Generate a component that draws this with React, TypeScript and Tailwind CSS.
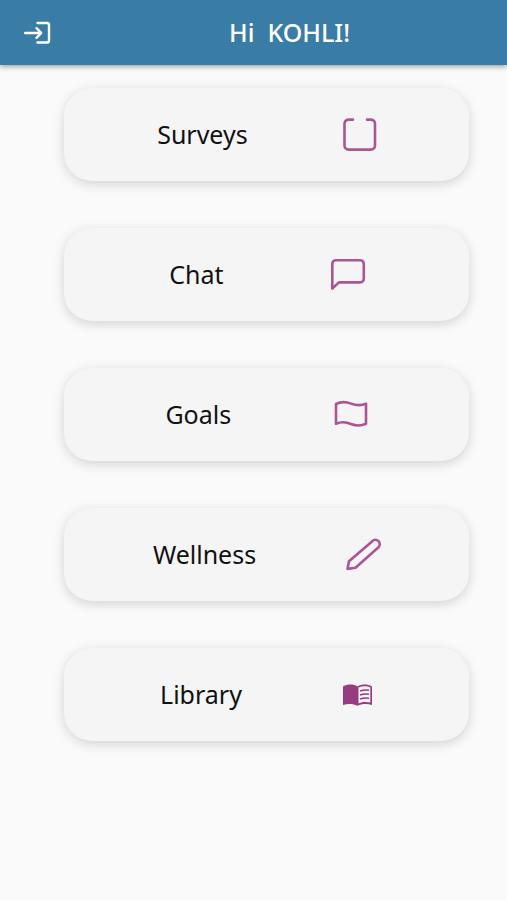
import type { ReactNode } from "react";

type MenuItem = { label: string; icon: ReactNode };

function LineIcon({ children }: { children: ReactNode }) {
  return (
    <svg
      viewBox="0 0 35 35"
      className="size-[35px] shrink-0 overflow-visible text-[#ab5595]"
      fill="none"
      stroke="currentColor"
      strokeWidth="2.6"
      strokeLinecap="round"
      strokeLinejoin="round"
      aria-hidden="true"
    >
      {children}
    </svg>
  );
}

const items: MenuItem[] = [
  {
    label: "Surveys",
    icon: (
      <LineIcon>
        <path d="M12 2.6H7.500a4 4 0 0 0-4 4v22a4 4 0 0 0 4 4h22.500a4 4 0 0 0 4-4v-22a4 4 0 0 0-4-4h-4" />
      </LineIcon>
    ),
  },
  {
    label: "Chat",
    icon: (
      <LineIcon>
        <path d="M3.300 31.500V6.800a3.600 3.600 0 0 1 3.600-3.600h24.300a3.600 3.600 0 0 1 3.600 3.600v15a3.600 3.600 0 0 1-3.600 3.600H10Z" />
      </LineIcon>
    ),
  },
  {
    label: "Goals",
    icon: (
      <LineIcon>
        <path d="M3 7c5-2.600 10-2.400 15-.4 5 1.900 10 2.100 15 .2v20c-5 2.300-10 2.100-15 .2-5-2.200-10-2.400-15-.3Z" />
      </LineIcon>
    ),
  },
  {
    label: "Wellness",
    icon: (
      <LineIcon>
        <path d="M2.500 31.900l1.500-7.600L27.300 4.200a4.300 4.300 0 0 1 6.200 6.100L10.500 30.700Z" />
      </LineIcon>
    ),
  },
  {
    label: "Library",
    icon: (
      <svg
        viewBox="-4 0 35 35"
        className="size-[35px] shrink-0 overflow-visible text-[#983b80]"
        aria-hidden="true"
      >
        <path
          fill="currentColor"
          d="M1 9.500c4.500-2.600 10.500-2.600 14.500 0 4-2.600 10-2.600 14.500 0v18.600c-4.500-1.700-10.500-1.500-14.500.7-4-2.200-10-2.400-14.500-.7Z"
        />
        <path fill="#f5f5f5" d="M16.500 10.600c3.500-1.500 8-1.700 11.800-.4v15.400c-3.800-.9-8.300-.6-11.800.9Z" />
        <path
          fill="none"
          stroke="currentColor"
          strokeWidth="1.600"
          d="M18 14c3-1 6-1.200 9-.7M18 18c3-1 6-1.200 9-.7M18 22c3-1 6-1.200 9-.7"
        />
      </svg>
    ),
  },
];

export default function App() {
  return (
    <div className="min-h-screen bg-[#fafafa] font-['Noto_Sans',sans-serif]">
      <header className="flex h-[65px] items-center bg-[#397ca6] text-white shadow-[0_2px_5px_rgba(0,0,0,0.35)]">
        <button type="button" aria-label="Log out" className="w-[72px] shrink-0 pl-6">
          <svg
            viewBox="0 0 28 24"
            className="h-6 w-7"
            fill="none"
            stroke="currentColor"
            strokeWidth="2.400"
            strokeLinecap="round"
            strokeLinejoin="round"
            aria-hidden="true"
          >
            <path d="M13.500 2H23a2 2 0 0 1 2 2v15.500a2 2 0 0 1-2 2h-9.500" />
            <path d="M1.200 12H17M12.500 7.200l4.800 4.800-4.800 4.800" />
          </svg>
        </button>
        <h1 className="flex-1 text-center text-[25px] font-medium whitespace-pre">Hi  KOHLI!</h1>
      </header>
      <main className="flex flex-col gap-[47px] pt-[23px] pr-[38px] pb-10 pl-16">
        {items.map(({ label, icon }) => (
          <button
            key={label}
            type="button"
            className="flex h-[93px] items-center justify-evenly rounded-[28px] bg-[#f5f5f5] text-[25px] leading-[31px] text-[#111111] shadow-[0_3px_12px_rgba(0,0,0,0.16)]"
          >
            <span>{label}</span>
            {icon}
          </button>
        ))}
      </main>
    </div>
  );
}
